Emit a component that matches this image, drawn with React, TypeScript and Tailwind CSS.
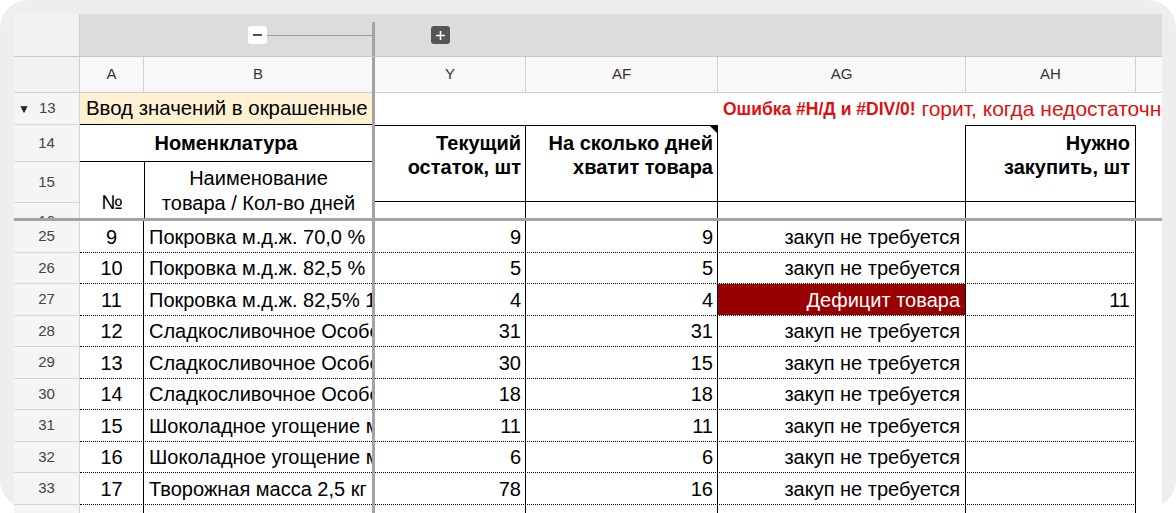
import React from "react";

type Row = {
  n: number;
  a: string;
  b: string;
  y: string;
  af: string;
  ag: string;
  ah?: string;
  deficit?: boolean;
};

const rows: Row[] = [
  { n: 25, a: "9", b: "Покровка м.д.ж. 70,0 % 1 кг", y: "9", af: "9", ag: "закуп не требуется" },
  { n: 26, a: "10", b: "Покровка м.д.ж. 82,5 % 1 кг", y: "5", af: "5", ag: "закуп не требуется" },
  { n: 27, a: "11", b: "Покровка м.д.ж. 82,5% 1 кг", y: "4", af: "4", ag: "Дефицит товара", ah: "11", deficit: true },
  { n: 28, a: "12", b: "Сладкосливочное Особое 82,5%", y: "31", af: "31", ag: "закуп не требуется" },
  { n: 29, a: "13", b: "Сладкосливочное Особое 72,5%", y: "30", af: "15", ag: "закуп не требуется" },
  { n: 30, a: "14", b: "Сладкосливочное Особое 0,4 кг", y: "18", af: "18", ag: "закуп не требуется" },
  { n: 31, a: "15", b: "Шоколадное угощение м.д.ж. 62%", y: "11", af: "11", ag: "закуп не требуется" },
  { n: 32, a: "16", b: "Шоколадное угощение м.д.ж. 72%", y: "6", af: "6", ag: "закуп не требуется" },
  { n: 33, a: "17", b: "Творожная масса 2,5 кг", y: "78", af: "16", ag: "закуп не требуется" },
  { n: 34, a: "", b: "", y: "", af: "", ag: "" },
];

const Freeze = () => <div className="w-[3px] shrink-0 bg-[#a3a3a3]" />;

function DataRow({ r, i }: { r: Row; i: number }) {
  const h = i % 2 === 0 ? "h-[32px]" : "h-[31px]";
  const cell = "shrink-0 h-full flex items-center text-[20px] text-black whitespace-nowrap overflow-hidden";
  return (
    <div className={`flex ${h}`}>
      <div className="w-[66px] shrink-0 flex items-center justify-center bg-[#f5f5f5] border-r border-b border-[#d4d4d4] text-[15px] text-[#444]">
        {r.n}
      </div>
      <div className="w-[292px] shrink-0 flex border-b border-dotted border-black">
        <div className={`${cell} w-[64px] justify-center border-r border-black`}>{r.a}</div>
        <div className={`${cell} w-[228px] pl-[5px]`}>{r.b}</div>
      </div>
      <Freeze />
      <div className="w-[761px] shrink-0 flex border-b border-dotted border-black">
        <div className={`${cell} w-[151px] justify-end pr-[4px] border-r border-black`}>{r.y}</div>
        <div className={`${cell} w-[192px] justify-end pr-[4px] border-r border-black`}>{r.af}</div>
        <div
          className={`${cell} w-[248px] justify-end pr-[5px] border-r border-black ${
            r.deficit ? "bg-[#990000] text-white" : ""
          }`}
        >
          {r.ag}
        </div>
        <div className={`${cell} w-[170px] justify-end pr-[5px] border-r border-black`}>{r.ah}</div>
      </div>
      <div className="w-[26px] shrink-0" />
    </div>
  );
}

export default function App() {
  return (
    <div className="w-[1176px] h-[513px] overflow-hidden bg-white font-['Liberation_Sans',Arial,sans-serif]">
      <div className="h-[508px] rounded-[28px] bg-[#eeeeee] pt-[14px] px-[14px]">
        <div className="h-[499px] bg-white overflow-hidden">
          {/* group bar */}
          <div className="flex h-[43px] border-b border-[#c8c8c8]">
            <div className="w-[66px] shrink-0 bg-[#f2f2f2] border-r border-[#d0d0d0]" />
            <div className="w-[292px] shrink-0 bg-[#dcdcdc] flex items-center pl-[168px]">
              <div className="w-[19px] h-[18px] shrink-0 rounded-[3px] bg-white flex items-center justify-center">
                <div className="w-[9px] h-[1.5px] bg-[#555]" />
              </div>
              <div className="flex-1 h-px bg-[#9a9a9a]" />
            </div>
            <div className="w-[3px] shrink-0 bg-[#dcdcdc] flex flex-col">
              <div className="h-[8px]" />
              <div className="flex-1 bg-[#a3a3a3]" />
            </div>
            <div className="flex-1 bg-[#dcdcdc] flex items-center pl-[56px]">
              <div className="w-[19px] h-[18px] rounded-[3px] bg-[#555] flex items-center justify-center">
                <svg width="11" height="11" viewBox="0 0 11 11">
                  <path d="M5.5 1v9M1 5.5h9" stroke="white" strokeWidth="1.6" />
                </svg>
              </div>
            </div>
          </div>

          {/* column headers */}
          <div className="flex h-[36px] text-[15px] text-[#333]">
            <div className="w-[66px] shrink-0 bg-[#f2f2f2] border-r border-b border-[#d0d0d0]" />
            <div className="w-[64px] shrink-0 bg-[#f8f8f8] border-r border-b border-[#d0d0d0] flex items-center justify-center">A</div>
            <div className="w-[228px] shrink-0 bg-[#f8f8f8] border-b border-[#d0d0d0] flex items-center justify-center">B</div>
            <Freeze />
            <div className="w-[151px] shrink-0 bg-[#f8f8f8] border-r border-b border-[#d0d0d0] flex items-center justify-center">Y</div>
            <div className="w-[192px] shrink-0 bg-[#f8f8f8] border-r border-b border-[#d0d0d0] flex items-center justify-center">AF</div>
            <div className="w-[248px] shrink-0 bg-[#f8f8f8] border-r border-b border-[#d0d0d0] flex items-center justify-center">AG</div>
            <div className="w-[170px] shrink-0 bg-[#f8f8f8] border-r border-b border-[#d0d0d0] flex items-center justify-center">AH</div>
            <div className="w-[26px] shrink-0 bg-[#f8f8f8] border-b border-[#d0d0d0]" />
          </div>

          {/* row 13 */}
          <div className="flex h-[32px]">
            <div className="w-[66px] shrink-0 bg-[#f5f5f5] border-r border-b border-[#d4d4d4] flex items-center pl-[4px] text-[15px] text-[#444]">
              <span className="text-[12px] text-[#222] mr-[9px]">▼</span>13
            </div>
            <div className="w-[292px] shrink-0 bg-[#fdf1d2] border-b border-black flex items-center pl-[6px] text-[20.4px] text-black whitespace-nowrap overflow-hidden">
              Ввод значений в окрашенные ячейки
            </div>
            <Freeze />
            <div className="w-[343px] shrink-0" />
            <div className="w-[444px] shrink-0 flex items-center pl-[5px] text-[17.5px] text-[#e00f0f] whitespace-nowrap overflow-hidden">
              <span className="font-bold">Ошибка #Н/Д и #DIV/0!</span>
              <span className="text-[21px]">&nbsp;горит, когда недостаточно данных</span>
            </div>
          </div>

          {/* header block rows 14-16 */}
          <div className="flex h-[93px]">
            <div className="w-[66px] shrink-0 flex flex-col text-[15px] text-[#444]">
              <div className="h-[37px] bg-[#f5f5f5] border-r border-b border-[#d4d4d4] flex items-center justify-center">14</div>
              <div className="h-[41px] bg-[#f5f5f5] border-r border-b border-[#d4d4d4] flex items-center justify-center">15</div>
              <div className="h-[15px] bg-[#f5f5f5] border-r border-[#d4d4d4] overflow-hidden flex justify-center pt-[10px] leading-[15px]">16</div>
            </div>
            <div className="w-[292px] shrink-0 flex flex-col">
              <div className="h-[37px] border-b border-black flex items-center justify-center text-[20px] font-bold text-black">
                Номенклатура
              </div>
              <div className="flex flex-1">
                <div className="w-[64px] shrink-0 flex justify-center pt-[28px] text-[20px] leading-[25px] text-black">№</div>
                <div className="w-[228px] shrink-0 border-l border-black text-center pt-[4px] text-[20px] leading-[25px] text-black whitespace-nowrap">
                  Наименование
                  <br />
                  товара / Кол-во дней
                </div>
              </div>
            </div>
            <Freeze />
            <div className="w-[151px] shrink-0 flex flex-col">
              <div className="h-[77px] border-t border-b border-r border-black text-right pr-[4px] pt-[5px] text-[20px] font-bold leading-[24px] text-black whitespace-nowrap">
                Текущий
                <br />
                остаток, шт
              </div>
              <div className="flex-1 border-r border-black" />
            </div>
            <div className="w-[192px] shrink-0 flex flex-col">
              <div className="relative h-[77px] border-t border-b border-r border-black text-right pr-[4px] pt-[5px] text-[20px] font-bold leading-[24px] text-black whitespace-nowrap">
                На сколько дней
                <br />
                хватит товара
                <svg className="absolute top-0 right-0" width="7" height="7" viewBox="0 0 7 7">
                  <path d="M0 0H7V7Z" fill="black" />
                </svg>
              </div>
              <div className="flex-1 border-r border-black" />
            </div>
            <div className="w-[248px] shrink-0 flex flex-col">
              <div className="h-[77px] border-b border-r border-black" />
              <div className="flex-1 border-r border-black" />
            </div>
            <div className="w-[170px] shrink-0 flex flex-col">
              <div className="h-[77px] border-t border-b border-r border-black text-right pr-[5px] pt-[5px] text-[20px] font-bold leading-[24px] text-black whitespace-nowrap">
                Нужно
                <br />
                закупить, шт
              </div>
              <div className="flex-1 border-r border-black" />
            </div>
            <div className="w-[26px] shrink-0" />
          </div>

          {/* horizontal freeze line */}
          <div className="h-[3px] bg-[#a3a3a3]" />

          {rows.map((r, i) => (
            <DataRow key={r.n} r={r} i={i} />
          ))}
        </div>
      </div>
    </div>
  );
}
